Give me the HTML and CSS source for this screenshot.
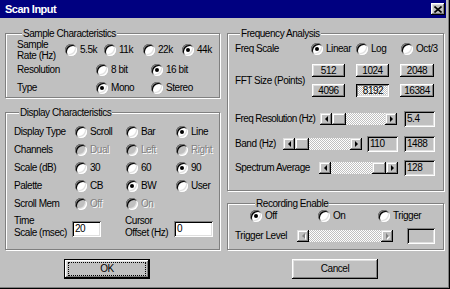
FILE: index.html
```html
<!DOCTYPE html>
<html>
<head>
<meta charset="utf-8">
<title>Scan Input</title>
<link rel="stylesheet" href="styles.css">
</head>
<body>
<div class="window">
  <div class="titlebar">
    <span class="title">Scan Input</span>
    <span class="close"><svg width="8" height="7" viewBox="0 0 8 7"><path d="M0.5 0.5 L7.5 6.5 M7.5 0.5 L0.5 6.5" stroke="#000" stroke-width="1.6" fill="none"/></svg></span>
  </div>
  <div class="content">
    <div class="columns">
      <div class="col col-left">
        <fieldset class="group sample">
          <legend>Sample Characteristics</legend>
          <div class="row rate">
            <div class="lbl two s-lbl1">Sample<br>Rate (Hz)</div>
            <label class="radio s-w39"><span class="rb"></span>5.5k</label>
            <label class="radio s-w39"><span class="rb"></span>11k</label>
            <label class="radio s-w39"><span class="rb"></span>22k</label>
            <label class="radio"><span class="rb on"></span>44k</label>
          </div>
          <div class="row res">
            <div class="lbl s-lbl2">Resolution</div>
            <label class="radio s-w55"><span class="rb"></span>8 bit</label>
            <label class="radio"><span class="rb on"></span>16 bit</label>
          </div>
          <div class="row type">
            <div class="lbl s-lbl2">Type</div>
            <label class="radio s-w55"><span class="rb on"></span>Mono</label>
            <label class="radio"><span class="rb"></span>Stereo</label>
          </div>
        </fieldset>

        <fieldset class="group display">
          <legend>Display Characteristics</legend>
          <div class="drow">
            <div class="lbl d-lbl">Display Type</div>
            <label class="radio d-w1"><span class="rb"></span>Scroll</label>
            <label class="radio d-w2"><span class="rb"></span>Bar</label>
            <label class="radio"><span class="rb on"></span>Line</label>
          </div>
          <div class="drow">
            <div class="lbl d-lbl">Channels</div>
            <label class="radio d-w1 dis"><span class="rb"></span>Dual</label>
            <label class="radio d-w2 dis"><span class="rb"></span>Left</label>
            <label class="radio dis"><span class="rb"></span>Right</label>
          </div>
          <div class="drow">
            <div class="lbl d-lbl">Scale (dB)</div>
            <label class="radio d-w1"><span class="rb"></span>30</label>
            <label class="radio d-w2"><span class="rb"></span>60</label>
            <label class="radio"><span class="rb on"></span>90</label>
          </div>
          <div class="drow">
            <div class="lbl d-lbl">Palette</div>
            <label class="radio d-w1"><span class="rb"></span>CB</label>
            <label class="radio d-w2"><span class="rb on"></span>BW</label>
            <label class="radio"><span class="rb"></span>User</label>
          </div>
          <div class="drow">
            <div class="lbl d-lbl">Scroll Mem</div>
            <label class="radio d-w1 dis"><span class="rb"></span>Off</label>
            <label class="radio dis"><span class="rb"></span>On</label>
          </div>
          <div class="trow">
            <div class="lbl two t-lbl1">Time<br>Scale (msec)</div>
            <div class="field white t-in1">20</div>
            <div class="lbl two t-lbl2">Cursor<br>Offset (Hz)</div>
            <div class="field white t-in2">0</div>
          </div>
        </fieldset>
      </div>

      <div class="col col-right">
        <fieldset class="group freq">
          <legend>Frequency Analysis</legend>
          <div class="row fscale">
            <div class="lbl f-lbl1">Freq Scale</div>
            <label class="radio f-w45"><span class="rb on"></span>Linear</label>
            <label class="radio f-w45"><span class="rb"></span>Log</label>
            <label class="radio"><span class="rb"></span>Oct/3</label>
          </div>
          <div class="fft">
            <div class="lbl f-lbl2">FFT Size (Points)</div>
            <div class="fft-grid">
              <div class="btn">512</div>
              <div class="btn">1024</div>
              <div class="btn">2048</div>
              <div class="btn">4096</div>
              <div class="btn pressed">8192</div>
              <div class="btn">16384</div>
            </div>
          </div>
          <div class="srow fres">
            <div class="lbl fres-lbl">Freq Resolution (Hz)</div>
            <div class="sb fres-sb">
              <span class="arr l"></span>
              <span class="track"><span class="thumb" style="margin-left:0px"></span></span>
              <span class="arr r"></span>
            </div>
            <div class="field box">5.4</div>
          </div>
          <div class="srow band">
            <div class="lbl band-lbl">Band (Hz)</div>
            <div class="sb band-sb">
              <span class="arr l"></span>
              <span class="track"><span class="thumb" style="margin-left:0px"></span></span>
              <span class="arr r"></span>
            </div>
            <div class="field box band-box1">110</div>
            <div class="field box band-box2">1488</div>
          </div>
          <div class="srow spec">
            <div class="lbl spec-lbl">Spectrum Average</div>
            <div class="sb spec-sb">
              <span class="arr l"></span>
              <span class="track"><span class="thumb" style="margin-left:41px"></span></span>
              <span class="arr r"></span>
            </div>
            <div class="field box">128</div>
          </div>
        </fieldset>

        <fieldset class="group rec">
          <legend>Recording Enable</legend>
          <div class="row recrow">
            <label class="radio r-w1"><span class="rb on"></span>Off</label>
            <label class="radio r-w2"><span class="rb"></span>On</label>
            <label class="radio"><span class="rb"></span>Trigger</label>
          </div>
          <div class="srow trig">
            <div class="lbl trig-lbl">Trigger Level</div>
            <div class="sb trig-sb disabled">
              <span class="arr l"></span>
              <span class="track"></span>
              <span class="arr r"></span>
            </div>
            <div class="field box trig-box"></div>
          </div>
        </fieldset>
      </div>
    </div>

    <div class="buttons">
      <div class="btn big default"><span class="focus">OK</span></div>
      <div class="btn big cancel">Cancel</div>
    </div>
  </div>
</div>
</body>
</html>
```

FILE: styles.css
```css
* { box-sizing: border-box; }
html, body { margin: 0; padding: 0; }
body {
  width: 450px;
  height: 289px;
  overflow: hidden;
  background: #c0c0c0;
  font-family: "Liberation Sans", Arial, sans-serif;
  font-size: 10px;
  letter-spacing: -0.45px;
  color: #000;
}

.window {
  width: 450px;
  height: 289px;
  background: #c0c0c0;
  box-shadow: inset -1px -1px 0 #000, inset -2px -2px 0 #808080;
  display: flex;
  flex-direction: column;
}

.titlebar {
  height: 18px;
  margin-right: 4px;
  background: #000080;
  display: flex;
  align-items: center;
  justify-content: space-between;
  padding: 0 1px 0 5px;
  flex: none;
}
.title {
  color: #fff;
  font-weight: bold;
  font-size: 11px;
  letter-spacing: -0.5px;
  line-height: 12px;
}
.close {
  width: 14px;
  height: 12px;
  background: #c0c0c0;
  box-shadow: inset -1px -1px 0 #000, inset 1px 1px 0 #fff, inset -2px -2px 0 #808080, inset 2px 2px 0 #dfdfdf;
  display: flex;
  align-items: center;
  justify-content: center;
}
.close svg { display: block; }

.content {
  padding: 10px 0 0 5px;
}
.columns {
  display: flex;
  gap: 7px;
}
.col-left { width: 215px; display: flex; flex-direction: column; }
.col-right { width: 217px; display: flex; flex-direction: column; }

.group {
  margin: 0;
  padding: 0;
  min-width: 0;
  border: 1px solid #808080;
  box-shadow: 1px 1px 0 #fff, inset 1px 1px 0 #fff;
}
.group legend {
  margin-left: 5px;
  padding: 0 1px;
  line-height: 11px;
  background: #c0c0c0;
}

.lbl { white-space: nowrap; flex: none; }
.radio { display: flex; align-items: center; white-space: nowrap; flex: none; }
.rb {
  width: 12px;
  height: 12px;
  border-radius: 50%;
  background: #fff;
  box-shadow: inset 1px 1px 0 #808080, inset -1px -1px 0 #fff, inset 2px 2px 0 #000, inset -2px -2px 0 #dfdfdf;
  margin-right: 3px;
  flex: none;
  position: relative;
}
.rb.on::after {
  content: "";
  position: absolute;
  left: 4px;
  top: 4px;
  width: 4px;
  height: 4px;
  border-radius: 50%;
  background: #000;
}
.radio.dis { color: #808080; text-shadow: 1px 1px 0 #fff; }
.radio.dis .rb { background: #c0c0c0; }

.row { display: flex; align-items: center; height: 12px; line-height: 12px; }

/* Sample */
.sample { height: 70px; padding-left: 11px; }
.sample .rate { height: 22px; }
.sample .rate .two { line-height: 11px; }
.sample .res { margin-top: 3px; }
.sample .type { margin-top: 6px; }
.s-lbl1 { width: 48px; }
.s-w39 { width: 39px; }
.s-lbl2 { width: 79px; }
.s-w55 { width: 55px; }

/* Display */
.display { margin-top: 9px; height: 143px; padding: 5px 0 0 8px; }
.drow { display: flex; align-items: center; height: 18px; line-height: 12px; }
.d-lbl { width: 61px; }
.d-w1 { width: 51px; }
.d-w2 { width: 50px; }
.trow { display: flex; margin-top: 2px; height: 24px; line-height: 12px; }
.t-lbl1 { width: 58px; }
.t-in1 { width: 29px; align-self: flex-end; margin-bottom: 2px; }
.t-lbl2 { width: 49px; margin-left: 24px; }
.t-in2 { width: 39px; align-self: flex-end; margin-bottom: 2px; }

.field {
  height: 16px;
  padding: 2px 3px;
  line-height: 12px;
  background: #c0c0c0;
  box-shadow: inset 1px 1px 0 #808080, inset -1px -1px 0 #fff, inset 2px 2px 0 #000, inset -2px -2px 0 #dfdfdf;
  flex: none;
}
.field.white { background: #fff; }

/* Frequency */
.freq { height: 163px; padding-left: 7px; }
.fscale { margin-top: 4px; }
.f-lbl1 { width: 76px; }
.f-w45 { width: 45px; }
.fft { display: flex; align-items: center; margin-top: 9px; }
.f-lbl2 { width: 77px; line-height: 12px; }
.fft-grid {
  display: grid;
  grid-template-columns: 33px 33px 34px;
  grid-template-rows: 13px 13px;
  column-gap: 11px;
  row-gap: 7px;
}
.btn {
  background: #c0c0c0;
  box-shadow: inset -1px -1px 0 #000, inset 1px 1px 0 #fff, inset -2px -2px 0 #808080, inset 2px 2px 0 #dfdfdf;
  display: flex;
  align-items: center;
  justify-content: center;
  line-height: 12px;
}
.btn.pressed {
  box-shadow: inset 1px 1px 0 #000, inset -1px -1px 0 #fff, inset 2px 2px 0 #808080, inset -2px -2px 0 #dfdfdf;
  background-color: #fff;
  background-image: conic-gradient(#c0c0c0 25%, #fff 0 50%, #c0c0c0 0 75%, #fff 0);
  background-size: 2px 2px;
  padding: 1px 0 0 1px;
}

.srow { display: flex; align-items: center; height: 16px; line-height: 12px; }
.fres { margin-top: 14px; }
.fres-lbl { width: 85px; letter-spacing: -0.6px; }
.fres-sb { width: 77px; }
.box { width: 31px; margin-left: 7px; }
.band { margin-top: 9px; }
.band-lbl { width: 48px; }
.band-sb { width: 79px; }
.band-box1 { margin-left: 5px; }
.band-box2 { margin-left: 6px; }
.spec { margin-top: 8px; }
.spec-lbl { width: 84px; }
.spec-sb { width: 78px; }

.sb { display: flex; height: 12px; flex: none; }
.arr {
  width: 12px;
  height: 12px;
  flex: none;
  background: #c0c0c0;
  box-shadow: inset -1px -1px 0 #000, inset 1px 1px 0 #dfdfdf, inset -2px -2px 0 #808080, inset 2px 2px 0 #fff;
  display: flex;
  align-items: center;
  justify-content: center;
}
.arr::before { content: ""; border-style: solid; width: 0; height: 0; }
.arr.l::before { border-width: 3px 3px 3px 0; border-color: transparent #000 transparent transparent; }
.arr.r::before { border-width: 3px 0 3px 3px; border-color: transparent transparent transparent #000; }
.sb.disabled .arr.l::before { border-right-color: #808080; filter: drop-shadow(1px 1px 0 #fff); }
.sb.disabled .arr.r::before { border-left-color: #808080; filter: drop-shadow(1px 1px 0 #fff); }
.track {
  flex: 1;
  display: flex;
  background-color: #fff;
  background-image: conic-gradient(#c0c0c0 25%, #fff 0 50%, #c0c0c0 0 75%, #fff 0);
  background-size: 2px 2px;
}
.thumb {
  width: 14px;
  height: 12px;
  flex: none;
  background: #c0c0c0;
  box-shadow: inset -1px -1px 0 #000, inset 1px 1px 0 #dfdfdf, inset -2px -2px 0 #808080, inset 2px 2px 0 #fff;
}

/* Recording */
.rec { margin-top: 7px; height: 52px; padding-left: 22px; }
.recrow { margin-top: 1px; }
.r-w1 { width: 68px; }
.r-w2 { width: 60px; }
.trig { margin-top: 6px; margin-left: -15px; }
.trig-lbl { width: 62px; }
.trig-sb { width: 96px; }
.trig-box { width: 28px; margin-left: 14px; }

/* Bottom buttons */
.buttons {
  display: flex;
  margin-top: 9px;
  padding-left: 59px;
}
.btn.big { width: 86px; height: 20px; }
.btn.default {
  box-shadow: inset 0 0 0 1px #000, inset -2px -2px 0 #000, inset 2px 2px 0 #fff, inset -3px -3px 0 #808080, inset 3px 3px 0 #dfdfdf;
}
.focus {
  display: flex;
  align-items: center;
  justify-content: center;
  width: 76px;
  height: 12px;
  outline: 1px dotted #000;
}
.btn.cancel { margin-left: 142px; }
```
